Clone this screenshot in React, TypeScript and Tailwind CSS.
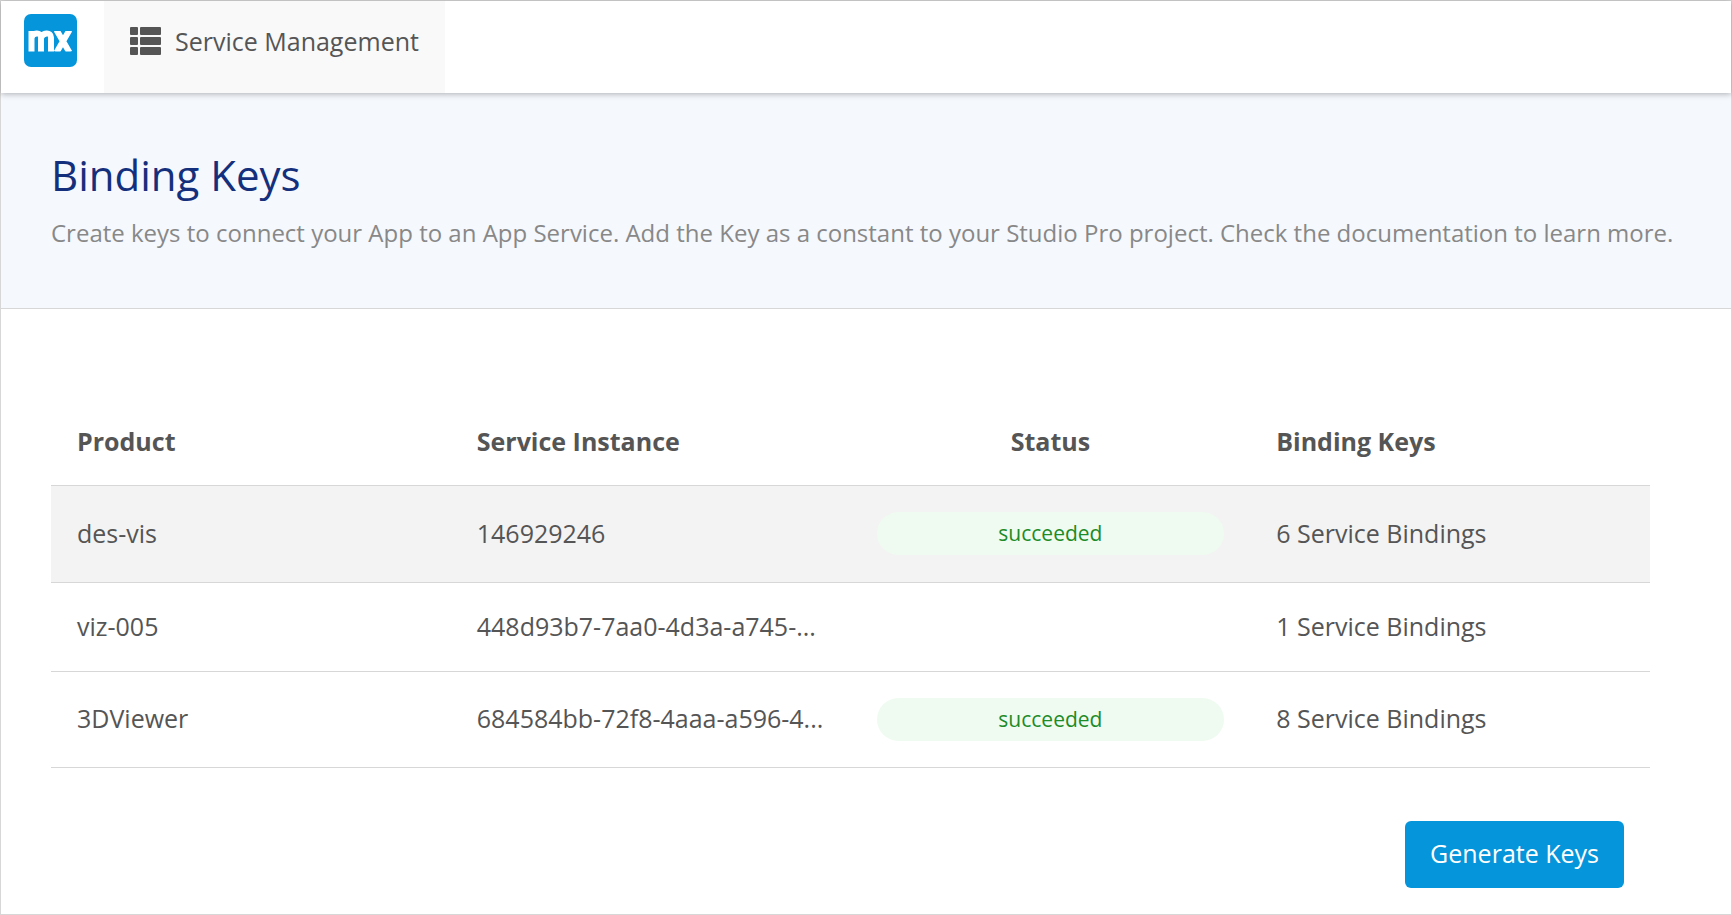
const rows = [
  { product: "des-vis", instance: "146929246", status: "succeeded", keys: "6 Service Bindings", row: "h-[97px] bg-[#f3f3f3]" },
  { product: "viz-005", instance: "448d93b7-7aa0-4d3a-a745-...", status: "", keys: "1 Service Bindings", row: "h-[89px]" },
  { product: "3DViewer", instance: "684584bb-72f8-4aaa-a596-4...", status: "succeeded", keys: "8 Service Bindings", row: "h-24" },
];

function Logo() {
  return (
    <svg viewBox="0 0 53 53" className="size-[53px]" role="img" aria-label="mx">
      <rect width="53" height="53" rx="7" fill="#0595db" />
      <g fill="none" stroke="#fff" strokeWidth="6">
        <path d="M7.500 37.500V17M7.500 24C8.500 18.500 17 17.500 17 23.500V37.500M17 24C18.500 18.500 27 17.500 27 23.500V37.500" />
        <path d="M32.500 16L45.500 38.500M45.500 16L32.500 38.500" />
      </g>
      <path d="M28 10H53V17H28ZM30 37.500H53V43H30Z" fill="#0595db" />
    </svg>
  );
}

function ListIcon() {
  return (
    <svg viewBox="0 0 31 28" className="h-7 w-[31px]" fill="#555" aria-hidden="true">
      {[0, 10, 20].map((y) => (
        <g key={y}>
          <rect y={y} width="8" height="8" rx="1" />
          <rect x="10" y={y} width="21" height="8" rx="1" />
        </g>
      ))}
    </svg>
  );
}

export default function App() {
  return (
    <div className="min-h-screen border border-[#d7d7d7] bg-white font-['Open_Sans',sans-serif] text-[25px] text-[#555]">
      <header className="relative flex h-[92px] bg-white shadow-[0_1px_6px_rgba(0,0,0,0.3)]">
        <a href="#" className="mr-[27px] ml-[23px] pt-[13px]"><Logo /></a>
        <a href="#" className="flex items-start gap-[14px] bg-[#f9f9f9] px-[26px] pt-[22px]">
          <span className="pt-1"><ListIcon /></span>
          <span className="leading-9">Service Management</span>
        </a>
      </header>
      <section className="h-[216px] border-b border-[#d7d7d7] bg-[#f5f8fd] pt-[54px] pl-[50px]">
        <h1 className="text-[42px] leading-[56px] text-[#14307c]">Binding Keys</h1>
        <p className="mt-3 text-2xl leading-9 whitespace-nowrap text-[#888]">
          Create keys to connect your App to an App Service. Add the Key as a constant to your Studio Pro project. Check the documentation to learn more.
        </p>
      </section>
      <main className="pr-[81px] pl-[50px] pt-[89px]">
        <table className="w-full table-fixed border-collapse">
          <thead>
            <tr className="h-[87px] border-b border-[#d7d7d7] text-left">
              <th className="px-[26px]">Product</th>
              <th className="px-[26px]">Service Instance</th>
              <th className="px-[26px] text-center">Status</th>
              <th className="px-[26px]">Binding Keys</th>
            </tr>
          </thead>
          <tbody>
            {rows.map((r) => (
              <tr key={r.product} className={`border-b border-[#d7d7d7] ${r.row}`}>
                <td className="px-[26px]">{r.product}</td>
                <td className="pl-[26px] whitespace-nowrap">{r.instance}</td>
                <td className="px-[26px]">
                  {r.status && <span className="block rounded-full bg-[#effbf0] text-center text-[21px] leading-[43px] text-[#1d8b27]">{r.status}</span>}
                </td>
                <td className="px-[26px]">{r.keys}</td>
              </tr>
            ))}
          </tbody>
        </table>
        <div className="mt-[53px] flex justify-end pr-[26px]">
          <button className="h-[67px] rounded-md bg-[#0595db] px-[25px] text-white">Generate Keys</button>
        </div>
      </main>
    </div>
  );
}
